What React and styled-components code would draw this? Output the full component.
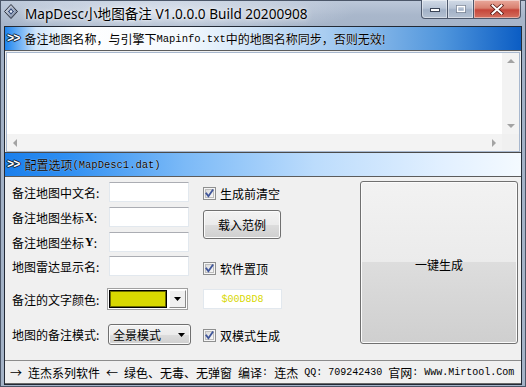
import React from "react";
import styled, { createGlobalStyle } from "styled-components";

const CJK = `"Noto Sans CJK SC", "Noto Sans", sans-serif`;
const MONO = `"Liberation Mono", "Noto Sans CJK SC", monospace`;

const GlobalStyle = createGlobalStyle`
  html, body {
    margin: 0;
    padding: 0;
    background: #9aaac0;
  }
  body {
    width: 526px;
    height: 387px;
    overflow: hidden;
    font-family: ${CJK};
  }
`;

const Window = styled.div`
  width: 526px;
  height: 387px;
  box-sizing: border-box;
  display: flex;
  flex-direction: column;
  border: 1px solid #4b5668;
  padding: 0 3px 1px;
  background:
    radial-gradient(ellipse 190px 22px at 165px 11px, rgba(235, 240, 248, 0.75), rgba(235, 240, 248, 0) 100%),
    linear-gradient(180deg, #bcc8d9 0px, #a9b7cb 14px, #a2b1c6 40px, #a4b3c7 100%);
`;

const TitleBar = styled.div`
  height: 25px;
  display: flex;
  align-items: flex-start;
  flex-shrink: 0;
`;

const AppIcon = styled.svg`
  margin: 3px 0 0 0;
  flex-shrink: 0;
`;

const Title = styled.div`
  margin: 2px 0 0 7px;
  font: 13.6px "Noto Sans", "Noto Sans CJK SC", sans-serif;
  color: #000;
  white-space: nowrap;
  text-shadow: 0 0 6px rgba(255, 255, 255, 0.9), 0 0 2px rgba(255, 255, 255, 0.8);
`;

const Captions = styled.div`
  margin: -1px 1px 0 auto;
  display: flex;
  height: 19px;
`;

const CaptionButton = styled.div`
  width: ${(p) => p.$w}px;
  box-sizing: border-box;
  display: flex;
  align-items: center;
  justify-content: center;
  border: 1px solid #4d586b;
  border-top: none;
  border-left: ${(p) => (p.$first ? "1px solid #4d586b" : "none")};
  border-radius: ${(p) => (p.$first ? "0 0 0 4px" : p.$close ? "0 0 4px 0" : "0")};
  box-shadow: inset 0 0 0 1px rgba(255, 255, 255, 0.45);
  background: ${(p) =>
    p.$close
      ? "linear-gradient(180deg, #e9a99c 0%, #d9806f 45%, #c6463a 55%, #d4705f 100%)"
      : "linear-gradient(180deg, #d2dbe7 0%, #b9c5d6 45%, #a2b1c6 55%, #b4c1d2 100%)"};
`;

const Client = styled.div`
  flex: 1;
  display: flex;
  flex-direction: column;
  background: #f0f0f0;
  border: 1px solid #232a36;
  min-height: 0;
`;

const Header = styled.div`
  height: 23px;
  flex-shrink: 0;
  display: flex;
  align-items: center;
  padding-left: 2px;
  border-top: ${(p) => (p.$tone === "config" ? "1px solid #4a4a4a" : "none")};
  border-bottom: 1px solid #5c5c5c;
  font: 12px ${CJK};
  color: #000;
  white-space: nowrap;
  text-shadow: 0 0 1px #fff;
  background: ${(p) =>
    p.$tone === "config"
      ? "linear-gradient(90deg, #1a7fec 0%, #2f8ff2 12%, #7cbaf7 35%, #bcdcfc 60%, #e2f0ff 85%, #f4faff 100%)"
      : "linear-gradient(90deg, #1c84ee 0%, #cfe5fb 6%, #ffffff 14%, #f4f9fe 35%, #a9cdf1 62%, #4f95dc 85%, #0b5dc4 100%)"};
`;

const Chevrons = styled.span`
  font: bold 12px ${MONO};
  color: #fff;
  letter-spacing: -1px;
  margin-right: 5px;
  text-shadow: 1px 0 0 #123, -1px 0 0 #123, 0 1px 0 #123, 0 -1px 0 #123;
`;

const Latin = styled.span`
  font-family: ${MONO};
  font-size: ${(p) => p.$size || 10.5}px;
  white-space: pre;
`;

const Memo = styled.div`
  margin: 1px 1px 0;
  height: 100px;
  flex-shrink: 0;
  box-sizing: border-box;
  border: 1px solid #a8b8ce;
  background: #fff;
  display: grid;
  grid-template-columns: 1fr 17px;
  grid-template-rows: 1fr 17px;
`;

const ScrollTrack = styled.div`
  background: #f3f3f3;
  display: flex;
  flex-direction: ${(p) => (p.$vertical ? "column" : "row")};
  justify-content: space-between;
  align-items: center;
  padding: ${(p) => (p.$vertical ? "5px 0 5px" : "0 5px")};
`;

const Corner = styled.div`
  background: #f0f0f0;
`;

const Arrow = ({ dir }) => {
  const pts = {
    up: "1,5 5,1 9,5",
    down: "1,1 5,5 9,1",
    left: "5,1 1,5 5,9",
    right: "1,1 5,5 1,9",
  }[dir];
  const vertical = dir === "up" || dir === "down";
  return (
    <svg width={vertical ? 10 : 6} height={vertical ? 6 : 10} viewBox={vertical ? "0 0 10 6" : "0 0 6 10"}>
      <polygon points={pts} fill="#a3a3a3" />
    </svg>
  );
};

const ConfigGrid = styled.div`
  display: grid;
  grid-template-columns: 96px 95px 157px 158px;
  grid-template-rows: 25px 25px 24px 32px 36px 22px;
  align-items: start;
  padding: 5px 0 0 7px;
`;

const Label = styled.div`
  height: 20px;
  display: flex;
  align-items: center;
  font: 12px ${CJK};
  color: #000;
  white-space: nowrap;
  margin-top: ${(p) => p.$offset || 0}px;
`;

const AxisLetter = styled.span`
  font: bold 12px "Liberation Serif", serif;
  margin-left: 1px;
`;

const TextBox = styled.div`
  width: 80px;
  height: 20px;
  box-sizing: border-box;
  margin-left: 1px;
  background: #fff;
  border: 1px solid #e2e8ee;
  border-top-color: #abadb3;
`;

const CheckRow = styled.label`
  display: flex;
  align-items: center;
  gap: 4px;
  height: 20px;
  margin-top: ${(p) => p.$offset || 0}px;
  font: 12px ${CJK};
  color: #000;
  white-space: nowrap;
`;

const PushButton = styled.div`
  box-sizing: border-box;
  width: ${(p) => p.$w}px;
  height: ${(p) => p.$h}px;
  margin-top: ${(p) => p.$offset || 0}px;
  display: flex;
  align-items: center;
  justify-content: center;
  border: 1px solid #707070;
  border-radius: 3px;
  box-shadow: inset 0 0 0 1px #fbfbfb;
  background: linear-gradient(180deg, #f2f2f2 0%, #ebebeb 50%, #dddddd 50%, #cfcfcf 100%);
  font: 12px ${CJK};
  color: #000;
`;

const BigButton = styled(PushButton)`
  grid-column: 4;
  grid-row: 1 / span 6;
  margin-top: -1px;
  padding-top: 4px;
`;

const ColorCombo = styled.div`
  width: 81px;
  height: 22px;
  box-sizing: border-box;
  margin-left: -1px;
  display: flex;
  gap: 2px;
  padding: 1px;
  background: #fff;
  border: 1px solid #a0a0a0;
`;

const Swatch = styled.div`
  flex: 1;
  background: ${(p) => p.$color};
  border: 1px solid #000;
  box-shadow: inset 0 0 0 1px #6b6b00;
`;

const DropButton = styled.div`
  width: 15px;
  display: flex;
  align-items: center;
  justify-content: center;
  background: #f0f0f0;
  border: 1px solid #8a8a8a;
  border-top-color: #fff;
  border-left-color: #fff;
`;

const ColorCode = styled.div`
  width: 79px;
  height: 20px;
  box-sizing: border-box;
  margin-top: 1px;
  display: flex;
  align-items: center;
  justify-content: center;
  background: #fff;
  border: 1px solid #e2e8ee;
  font: 10px ${MONO};
  color: ${(p) => p.$color};
`;

const Select = styled.div`
  width: 83px;
  height: 21px;
  box-sizing: border-box;
  display: flex;
  align-items: center;
  justify-content: space-between;
  padding: 0 5px 0 4px;
  border: 1px solid #707070;
  border-radius: 3px;
  box-shadow: inset 0 0 0 1px #fbfbfb;
  background: linear-gradient(180deg, #f2f2f2 0%, #ebebeb 50%, #dddddd 50%, #cfcfcf 100%);
  font: 12px ${CJK};
`;

const StatusBar = styled.div`
  margin-top: auto;
  height: 22px;
  flex-shrink: 0;
  display: flex;
  align-items: center;
  padding-left: 5px;
  border-top: 1px solid #8c8c8c;
  border-bottom: 1px solid #6a6a6a;
  font: 12px ${CJK};
  color: #000;
  white-space: pre;
`;

const Wide = styled.span`
  display: inline-block;
  width: 12px;
  text-align: center;
`;

const CheckBox = () => (
  <svg width="13" height="13" viewBox="0 0 13 13">
    <defs>
      <linearGradient id="cbfill" x1="0" y1="0" x2="1" y2="1">
        <stop offset="0" stopColor="#d9d9d9" />
        <stop offset="1" stopColor="#fafafa" />
      </linearGradient>
    </defs>
    <rect x="0.5" y="0.5" width="12" height="12" fill="#f5f5f5" stroke="#8e8f8f" />
    <rect x="2.5" y="2.5" width="8" height="8" fill="url(#cbfill)" stroke="#bdbdbd" />
    <path d="M3.3 6.4 L5.4 9.2 L9.6 3.2" fill="none" stroke="#40569a" strokeWidth="1.8" strokeLinecap="square" />
  </svg>
);

const SmallDown = () => (
  <svg width="7" height="4" viewBox="0 0 7 4">
    <polygon points="0,0 7,0 3.5,4" fill="#000" />
  </svg>
);

const Glyph = ({ kind }) => {
  if (kind === "min")
    return (
      <svg width="12" height="6" viewBox="0 0 12 6">
        <rect x="1.5" y="2.5" width="9" height="3" fill="#fff" stroke="#3a4456" />
      </svg>
    );
  if (kind === "max")
    return (
      <svg width="12" height="10" viewBox="0 0 12 10">
        <rect x="1.5" y="1.5" width="9" height="7" fill="none" stroke="#3a4456" strokeWidth="1" opacity="0.5" />
        <rect x="2.5" y="2.5" width="7" height="5" fill="none" stroke="#fff" strokeWidth="1.4" />
      </svg>
    );
  return (
    <svg width="14" height="11" viewBox="0 0 14 11">
      <path d="M2.5 1.5 L11.5 9.5 M11.5 1.5 L2.5 9.5" stroke="#5a1a14" strokeWidth="3.6" strokeLinecap="square" />
      <path d="M2.5 1.5 L11.5 9.5 M11.5 1.5 L2.5 9.5" stroke="#fff" strokeWidth="2" strokeLinecap="square" />
    </svg>
  );
};

const rows = [
  { label: "备注地图中文名:" },
  { label: "备注地图坐标", axis: "X" },
  { label: "备注地图坐标", axis: "Y" },
  { label: "地图雷达显示名:" },
];

export default function App() {
  const textColor = "#d8d800";
  return (
    <>
      <GlobalStyle />
      <Window>
        <TitleBar>
          <AppIcon width="14" height="15" viewBox="0 0 14 15">
            <defs>
              <linearGradient id="ico" x1="0" y1="0" x2="1" y2="1">
                <stop offset="0" stopColor="#e4e8f0" />
                <stop offset="1" stopColor="#5d6f8c" />
              </linearGradient>
            </defs>
            <polygon points="7,0.5 13.5,7.5 7,14.5 0.5,7.5" fill="url(#ico)" stroke="#2a2f3a" />
            <polygon points="7,3.5 10.5,7.5 7,11.5 3.5,7.5" fill="#3a4f7a" stroke="#c9d2e2" strokeWidth="0.8" />
            <circle cx="7" cy="7.5" r="1.3" fill="#e8eef8" />
          </AppIcon>
          <Title>MapDesc小地图备注 V1.0.0.0 Build 20200908</Title>
          <Captions>
            <CaptionButton $w={27} $first>
              <Glyph kind="min" />
            </CaptionButton>
            <CaptionButton $w={26}>
              <Glyph kind="max" />
            </CaptionButton>
            <CaptionButton $w={47} $close>
              <Glyph kind="close" />
            </CaptionButton>
          </Captions>
        </TitleBar>

        <Client>
          <Header>
            <Chevrons>&gt;&gt;</Chevrons>
            备注地图名称，与引擎下<Latin>Mapinfo.txt</Latin>中的地图名称同步，否则无效!
          </Header>

          <Memo>
            <div />
            <ScrollTrack $vertical>
              <Arrow dir="up" />
              <Arrow dir="down" />
            </ScrollTrack>
            <ScrollTrack>
              <Arrow dir="left" />
              <Arrow dir="right" />
            </ScrollTrack>
            <Corner />
          </Memo>

          <Header $tone="config">
            <Chevrons>&gt;&gt;</Chevrons>
            配置选项<Latin>(MapDesc1.dat)</Latin>
          </Header>

          <ConfigGrid>
            {rows.map((r, i) => (
              <React.Fragment key={i}>
                <Label style={{ gridRow: i + 1, gridColumn: 1 }}>
                  {r.label}
                  {r.axis && (
                    <>
                      <AxisLetter>{r.axis}</AxisLetter>:
                    </>
                  )}
                </Label>
                <TextBox style={{ gridRow: i + 1, gridColumn: 2 }} />
              </React.Fragment>
            ))}

            <CheckRow style={{ gridRow: 1, gridColumn: 3 }} $offset={1}>
              <CheckBox />
              生成前清空
            </CheckRow>
            <PushButton style={{ gridRow: "2 / span 2", gridColumn: 3 }} $w={78} $h={29} $offset={3}>
              载入范例
            </PushButton>
            <CheckRow style={{ gridRow: 4, gridColumn: 3 }} $offset={2}>
              <CheckBox />
              软件置顶
            </CheckRow>

            <Label style={{ gridRow: 5, gridColumn: 1 }} $offset={1}>
              备注的文字颜色:
            </Label>
            <ColorCombo style={{ gridRow: 5, gridColumn: 2 }}>
              <Swatch $color={textColor} />
              <DropButton>
                <SmallDown />
              </DropButton>
            </ColorCombo>
            <ColorCode style={{ gridRow: 5, gridColumn: 3 }} $color={textColor}>
              $00D8D8
            </ColorCode>

            <Label style={{ gridRow: 6, gridColumn: 1 }}>地图的备注模式:</Label>
            <Select style={{ gridRow: 6, gridColumn: 2 }}>
              全景模式
              <SmallDown />
            </Select>
            <CheckRow style={{ gridRow: 6, gridColumn: 3 }} $offset={1}>
              <CheckBox />
              双模式生成
            </CheckRow>

            <BigButton $w={158} $h={163}>一键生成</BigButton>
          </ConfigGrid>

          <StatusBar>
            <Wide>→</Wide>
            <Latin $size={10}>{" "}</Latin>
            连杰系列软件
            <Latin $size={10}>{" "}</Latin>
            <Wide>←</Wide>
            <Latin $size={10}>{" "}</Latin>
            绿色、无毒、无弹窗
            <Latin $size={10}>{" "}</Latin>
            编译<Latin $size={10}>{": "}</Latin>连杰
            <Latin $size={10}>{" QQ: 709242430 "}</Latin>
            官网<Latin $size={10}>{": Www.Mirtool.Com"}</Latin>
          </StatusBar>
        </Client>
      </Window>
    </>
  );
}
